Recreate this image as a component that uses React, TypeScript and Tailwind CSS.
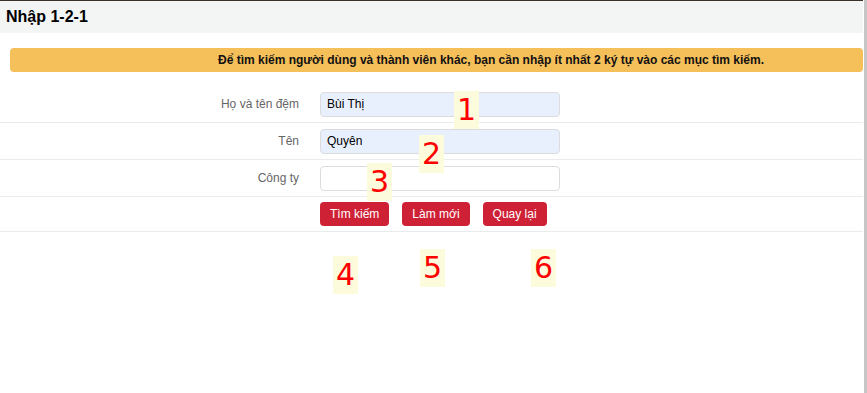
import React from "react"

const fields = [
    { label: "Họ và tên đệm", value: "Bùi Thị", filled: true },
    { label: "Tên", value: "Quyên", filled: true },
    { label: "Công ty", value: "", filled: false },
]

const buttons = ["Tìm kiếm", "Làm mới", "Quay lại"]

// red numbered callouts laid over the form
const marks = [
    { n: "1", cls: "left-[454px] top-[91px]" },
    { n: "2", cls: "left-[419px] top-[135px]" },
    { n: "3", cls: "left-[367px] top-[163px]" },
    { n: "4", cls: "left-[333px] top-[256px]" },
    { n: "5", cls: "left-[420px] top-[249px]" },
    { n: "6", cls: "left-[531px] top-[249px]" },
]

export default function App() {
    return (
        <div className="flex h-[393px] w-[867px] overflow-hidden bg-white font-['Liberation_Sans',Arial,sans-serif]">
            <div className="relative flex-1">
                <div className="h-px bg-[#3b3327]" />
                <div className="flex h-[32px] items-center bg-[#f3f4f4] pl-[6px] text-[16px] font-bold text-black">
                    Nhập 1-2-1
                </div>

                <div className="ml-[10px] mt-[15px] flex h-[24px] items-center rounded-[4px] bg-[#f5bf5a] pl-[208px] text-[12px] font-bold text-[#111]">
                    Để tìm kiếm người dùng và thành viên khác, bạn cần nhập ít nhất 2 ký tự vào các mục tìm kiếm.
                </div>

                <div className="mt-[14px]">
                    {fields.map((f) => (
                        <div key={f.label} className="flex h-[37px] items-center border-b border-[#ebebeb]">
                            <div className="w-[300px] pr-[1px] text-right text-[12px] text-[#666]">{f.label}</div>
                            <div
                                className={`ml-[20px] flex h-[25px] w-[240px] items-center rounded-[4px] border border-[#dcdcdc] pl-[6px] text-[12px] text-black ${f.filled ? "bg-[#e8f0fe]" : "bg-white"}`}
                            >
                                {f.value}
                            </div>
                        </div>
                    ))}
                    <div className="flex h-[35px] items-center gap-[13px] border-b border-[#ebebeb] pl-[320px]">
                        {buttons.map((b) => (
                            <button key={b} className="flex h-[24px] items-center rounded-[4px] bg-[#cf2136] px-[10px] text-[12px] text-white">
                                {b}
                            </button>
                        ))}
                    </div>
                </div>

                {marks.map((m) => (
                    <div
                        key={m.n}
                        className={`absolute flex h-[38px] w-[25px] items-center justify-center bg-[#fcfcdc] font-['DejaVu_Sans',sans-serif] text-[30px] leading-none text-[#ff0000] ${m.cls}`}
                    >
                        {m.n}
                    </div>
                ))}
            </div>
            <div className="ml-px w-[3px] bg-[#c6c6c6]" />
        </div>
    )
}
